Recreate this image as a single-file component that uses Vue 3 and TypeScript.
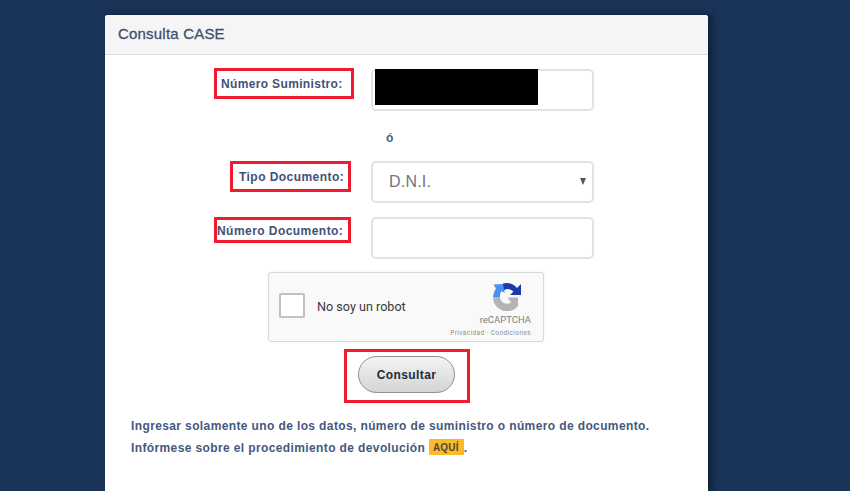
<script setup lang="ts">
import { ref } from 'vue';

const suministro = ref('');
const documento = ref('');
const tipo = ref('D.N.I.');
const tipos = ['D.N.I.', 'C.E.', 'R.U.C.'];
</script>

<template>
  <div class="page">
    <div class="card">
      <div class="card-header">Consulta CASE</div>
      <div class="card-body">
        <div class="row row-first">
          <div class="label-cell"><label class="mark label-a">Número Suministro:</label></div>
          <div class="input-wrap">
            <input v-model="suministro" class="field" type="text" />
            <div class="redact"></div>
          </div>
        </div>
        <div class="or">ó</div>
        <div class="row row-tipo">
          <div class="label-cell"><label class="mark label-b">Tipo Documento:</label></div>
          <div class="select-wrap">
            <select v-model="tipo" class="field select">
              <option v-for="t in tipos" :key="t">{{ t }}</option>
            </select>
            <span class="caret"></span>
          </div>
        </div>
        <div class="row row-num">
          <div class="label-cell"><label class="mark label-c">Número Documento:</label></div>
          <input v-model="documento" class="field" type="text" />
        </div>

        <div class="captcha">
          <span class="check"></span>
          <span class="robot">No soy un robot</span>
          <div class="brand">
            <svg class="logo" width="28" height="28" viewBox="0 0 28 28">
              <path d="M14 14 L0 14 A14 14 0 0 1 3 5.5 L0.5 1.5 L11 1 L11.5 10 L8.5 8 A8 8 0 0 0 7 14 Z" fill="#4a90f0" />
              <path d="M10 0.5 A14 14 0 0 1 24 5 L28 1 L28 12 L17 12 L20.5 8.5 A8 8 0 0 0 11 7 Z" fill="#1c3aa9" />
              <path d="M0 14 L7 14 A7 7 0 0 0 18 19.5 L14.5 14.5 L25 14.5 L25 23 A14 14 0 0 1 0 14 Z" fill="#b4b4b4" />
            </svg>
            <div class="brand-name">reCAPTCHA</div>
            <div class="brand-links">Privacidad · Condiciones</div>
          </div>
        </div>

        <div class="action">
          <div class="mark-btn">
            <button class="consult" type="button">Consultar</button>
          </div>
        </div>

        <p class="note">Ingresar solamente uno de los datos, número de suministro o número de documento.</p>
        <p class="note">Infórmese sobre el procedimiento de devolución <a class="here">AQUÍ</a>.</p>
      </div>
    </div>
  </div>
</template>

<style scoped>
.page {
  height: 491px;
  box-sizing: border-box;
  overflow: hidden;
  padding: 15px 0 0 105px;
  background: #1a3358;
  font-family: "Liberation Sans", Arial, sans-serif;
}
.card {
  width: 603px;
  height: 476px;
  background: #fff;
  border-radius: 3px 3px 0 0;
  box-shadow: 4px 0 6px rgba(8, 18, 36, 0.6);
}
.card-header {
  height: 40px;
  box-sizing: border-box;
  padding: 9px 13px 0;
  background: #f5f5f5;
  border-bottom: 1px solid #ddd;
  border-radius: 3px 3px 0 0;
  font-size: 15px;
  font-weight: 500;
  line-height: 20px;
  letter-spacing: 0.2px;
  color: #3d5070;
  -webkit-text-stroke: 0.3px #3d5070;
}
.card-body {
  padding-top: 14px;
}
.row {
  display: grid;
  grid-template-columns: 249px 223px;
  column-gap: 17px;
}
.label-cell {
  display: flex;
  justify-content: flex-end;
  align-items: flex-start;
}
.mark {
  box-sizing: border-box;
  border: 3px solid #ed1c2e;
  font-size: 12px;
  font-weight: 700;
  letter-spacing: 0.45px;
  color: #3f5179;
  white-space: nowrap;
}
.label-a {
  height: 31px;
  width: 140px;
  margin-top: -1px;
  padding: 6px 0 0 4px;
  letter-spacing: 0.35px;
}
.label-b {
  height: 31px;
  width: 121px;
  margin-right: 3px;
  padding: 6px 0 0 6px;
}
.label-c {
  height: 26px;
  width: 137px;
  margin-right: 3px;
  padding: 4px 0 0 0;
}
.field {
  display: block;
  width: 223px;
  height: 42px;
  box-sizing: border-box;
  border: 2px solid #e2e2e2;
  border-radius: 5px;
  background: #fff;
  outline: none;
}
.input-wrap {
  position: relative;
}
.redact {
  position: absolute;
  left: 4px;
  top: 0;
  width: 163px;
  height: 36px;
  background: #000;
}
.or {
  height: 50px;
  box-sizing: border-box;
  padding: 20px 0 0 281px;
  font-size: 12px;
  font-weight: 700;
  line-height: 14px;
  color: #3f5f8f;
}
.select-wrap {
  position: relative;
}
.select {
  appearance: none;
  padding: 0 0 2px 16px;
  font-family: inherit;
  font-size: 16px;
  letter-spacing: 0.2px;
  color: #6d7682;
}
.caret {
  position: absolute;
  right: 8px;
  top: 17px;
  width: 0;
  height: 0;
  border-left: 3.5px solid transparent;
  border-right: 3.5px solid transparent;
  border-top: 7px solid #555;
}
.row-num {
  margin-top: 14px;
}
.captcha {
  position: relative;
  display: flex;
  align-items: center;
  width: 276px;
  height: 70px;
  box-sizing: border-box;
  margin: 13px 0 0 163px;
  padding: 0 0 3px 10px;
  background: #f9f9f9;
  border: 1px solid #d9d9d9;
  border-radius: 3px;
  box-shadow: 0 0 3px rgba(0, 0, 0, 0.06);
}
.check {
  width: 26px;
  height: 25px;
  box-sizing: border-box;
  background: #fff;
  border: 2px solid #c1c1c1;
  border-radius: 2px;
}
.robot {
  margin: 2px 0 0 12px;
  font-family: Roboto, "Liberation Sans", sans-serif;
  font-size: 12.6px;
  color: #3a3a3a;
}
.brand {
  position: absolute;
  right: 12px;
  top: 10px;
  display: flex;
  flex-direction: column;
  align-items: flex-end;
}
.logo {
  margin-right: 10px;
}
.brand-name {
  margin-top: 3px;
  font-family: Roboto, "Liberation Sans", sans-serif;
  font-size: 9.5px;
  line-height: 11px;
  color: #7d7d7d;
}
.brand-links {
  margin-top: 4px;
  font-family: Roboto, "Liberation Sans", sans-serif;
  font-size: 6.5px;
  line-height: 9px;
  letter-spacing: 0.4px;
  color: #8f8f8f;
  white-space: nowrap;
}
.action {
  display: flex;
  margin: 7px 0 0 239px;
}
.mark-btn {
  width: 126px;
  height: 54px;
  box-sizing: border-box;
  border: 3px solid #ed1c2e;
  padding: 4px 0 0 11px;
}
.consult {
  display: block;
  width: 97px;
  height: 37px;
  padding: 0;
  border: 1px solid #8f8f8f;
  border-radius: 19px;
  background: linear-gradient(#f4f4f4, #d4d4d2);
  font-family: inherit;
  font-size: 12px;
  font-weight: 700;
  letter-spacing: 0.4px;
  color: #1f2a3a;
}
.note {
  margin: 0 0 0 26px;
  font-size: 12px;
  font-weight: 700;
  line-height: 22px;
  letter-spacing: 0.38px;
  color: #43597d;
  white-space: nowrap;
}
.action + .note {
  margin-top: 12px;
}
.here {
  display: inline-block;
  height: 16px;
  padding: 0 5px 0 4px;
  line-height: 17px;
  vertical-align: 1px;
  background: #fdb92c;
  font-size: 10px;
  letter-spacing: 0.2px;
  color: #4a4a3a;
}
</style>
